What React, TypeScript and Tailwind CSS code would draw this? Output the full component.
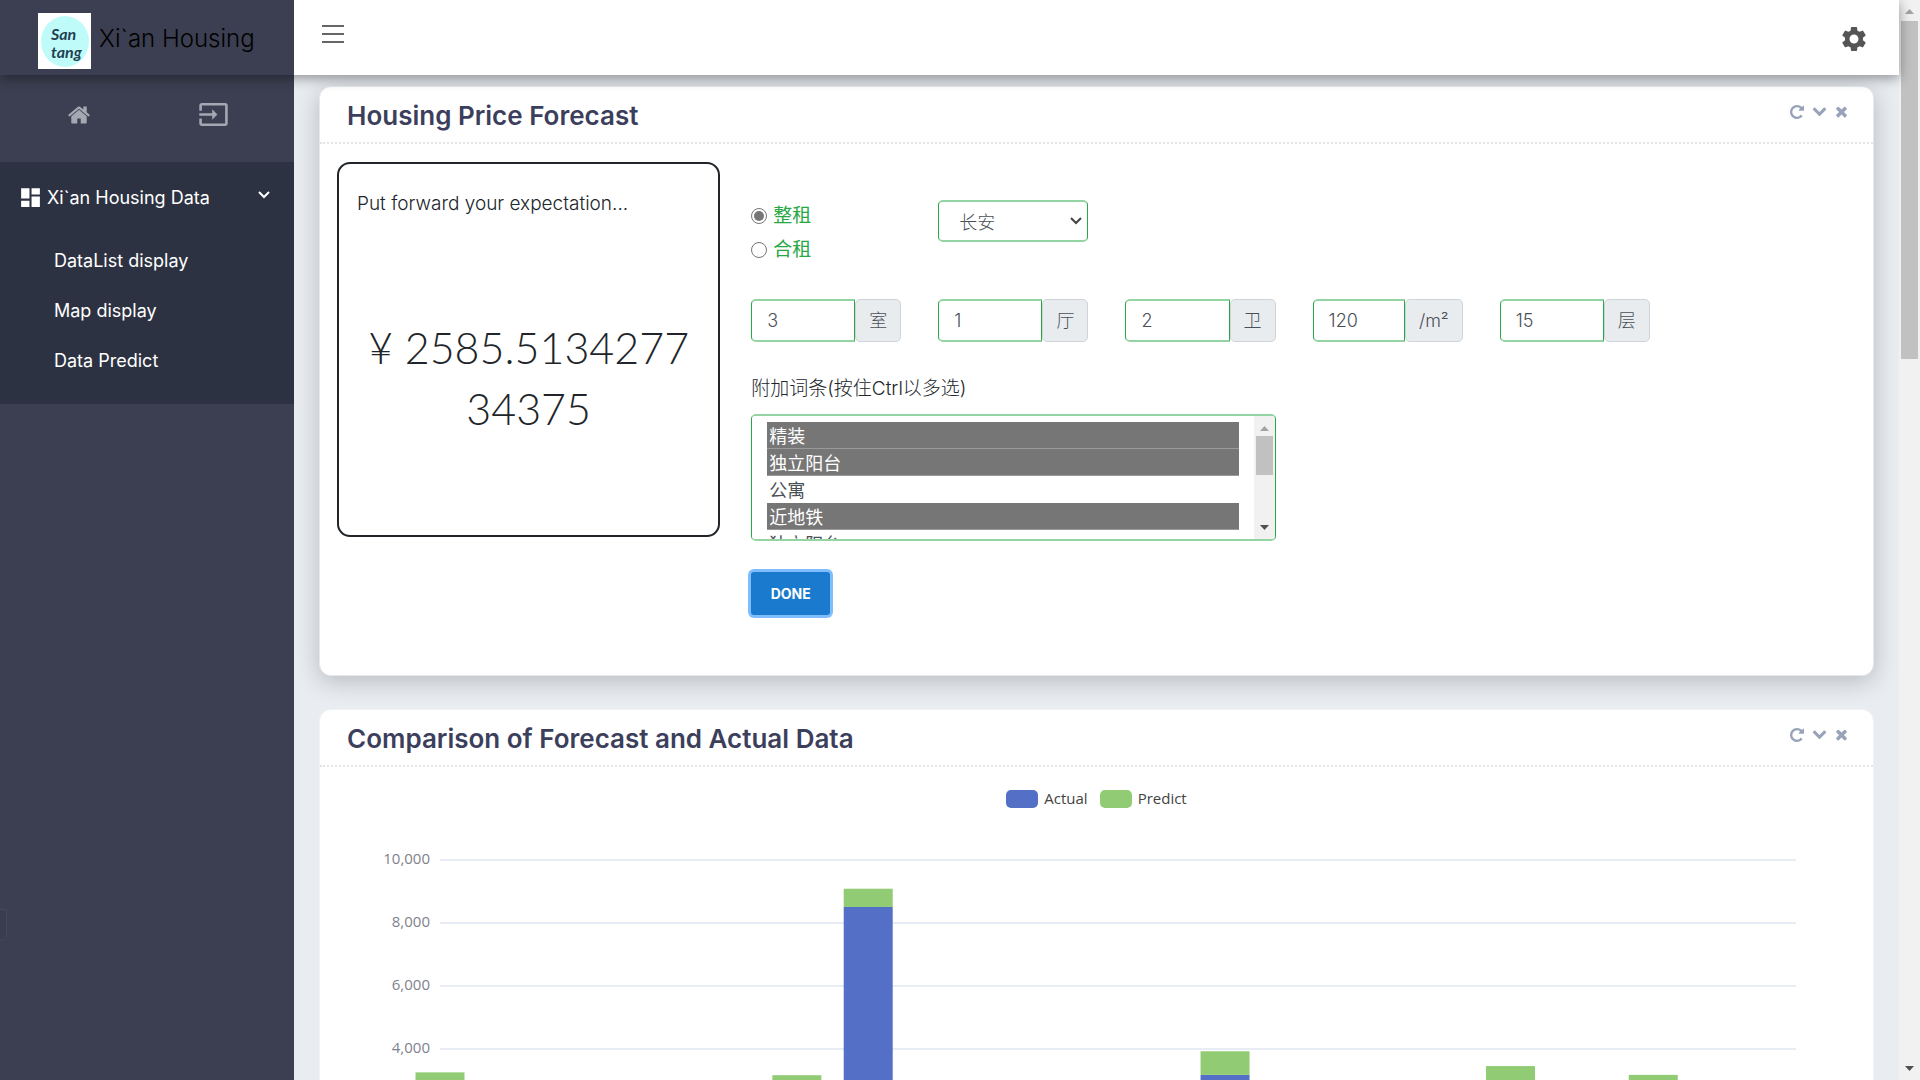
import React from "react";
import { MdDashboard, MdInput, MdSettings } from "react-icons/md";

type IconProps = { className?: string };

const HomeIcon = ({ className }: IconProps) => (
  <svg viewBox="0 0 1792 1792" fill="currentColor" className={className} aria-hidden="true">
    <path d="M1472 992v480q0 26-19 45t-45 19h-384v-384h-256v384h-384q-26 0-45-19t-19-45v-480q0-1 .5-3t.5-3l575-474 575 474q1 2 1 6zm223-69l-62 74q-8 9-21 11h-3q-13 0-21-7l-692-577-692 577q-12 8-24 7-13-2-21-11l-62-74q-8-10-7-23.500t11-21.500l719-599q32-26 76-26t76 26l244 204v-195q0-14 9-23t23-9h192q14 0 23 9t9 23v408l219 182q10 8 11 21.500t-7 23.500z" />
  </svg>
);

const RepeatIcon = () => (
  <svg viewBox="0 128 1536 1536" fill="currentColor" className="size-3.5" aria-hidden="true">
    <path d="M1536 256v448q0 26-19 45t-45 19h-448q-42 0-59-40-17-39 14-69l138-138q-148-137-349-137-104 0-198.500 40.500t-163.500 109.500-109.500 163.500-40.500 198.500 40.500 198.500 109.500 163.500 163.500 109.500 198.500 40.500q119 0 225-52t179-147q7-10 23-12 15 0 25 9l137 138q9 8 9.500 20.500t-7.500 22.500q-109 132-264 204.500t-327 72.500q-156 0-298-61t-245-164-164-245-61-298 61-298 164-245 245-164 298-61q147 0 284.500 55.500t244.500 156.500l130-129q29-31 70-14 39 17 39 59z" />
  </svg>
);

const ChevronIcon = () => (
  <svg viewBox="0 128 1792 1792" fill="currentColor" className="size-[15px]" aria-hidden="true">
    <path d="M1683 808l-742 741q-19 19-45 19t-45-19l-742-741q-19-19-19-45.500t19-45.500l166-165q19-19 45-19t45 19l531 531 531-531q19-19 45-19t45 19l166 165q19 19 19 45.500t-19 45.500z" />
  </svg>
);

const TimesIcon = () => (
  <svg viewBox="180 180 1432 1432" fill="currentColor" className="size-[13px]" aria-hidden="true">
    <path d="M1490 1322q0 40-28 68l-136 136q-28 28-68 28t-68-28l-294-294-294 294q-28 28-68 28t-68-28l-136-136q-28-28-28-68t28-68l294-294-294-294q-28-28-28-68t28-68l136-136q28-28 68-28t68 28l294 294 294-294q28-28 68-28t68 28l136 136q28 28 28 68t-28 68l-294 294 294 294q28 28 28 68z" />
  </svg>
);

const Logo = () => (
  <svg viewBox="0 0 53 56" className="h-14 w-[53px] bg-white" role="img" aria-label="San tang">
    <ellipse cx="27" cy="28.500" rx="24" ry="25.500" fill="#bffcf9" />
    <g fill="#1f3f52" fontFamily="Lato, sans-serif" fontStyle="italic" fontWeight="700" fontSize="16">
      <text x="13" y="27">San</text>
      <text x="13" y="45">tang</text>
    </g>
  </svg>
);

const Triangle = ({ up, className }: { up?: boolean; className?: string }) => (
  <svg viewBox="0 0 9 5" fill="currentColor" className={className} aria-hidden="true">
    <path d={up ? "M0 5 4.500 0 9 5z" : "M0 0h9L4.500 5z"} />
  </svg>
);

const navItems = ["DataList display", "Map display", "Data Predict"];

function Header() {
  return (
    <header className="relative z-20 flex h-[75px] shrink-0 bg-white shadow-[0_3px_12px_rgba(0,0,0,0.4)]">
      <a href="#top" className="flex w-[294px] shrink-0 gap-2 bg-[#3c3f51] pt-[13px] pl-[38px] text-black">
        <Logo />
        <span className="pt-2 text-[24px] leading-9 font-light whitespace-nowrap">Xi`an Housing</span>
      </a>
      <div className="flex min-w-0 flex-1 items-start justify-between pr-[30px] pl-7">
        <button type="button" aria-label="Toggle menu" className="mt-[25px] flex w-[22px] flex-col gap-1.5">
          <span className="h-0.5 w-full bg-[#666]" />
          <span className="h-0.5 w-full bg-[#666]" />
          <span className="h-0.5 w-full bg-[#666]" />
        </button>
        <button type="button" aria-label="Settings" className="mt-6 text-[#555]">
          <MdSettings className="size-[30px]" />
        </button>
      </div>
    </header>
  );
}

function Sidebar() {
  return (
    <aside className="relative w-[294px] shrink-0 bg-[#3c3f51]">
      <div className="flex h-[87px] items-start text-[#a5a7b3]">
        <a href="#home" aria-label="Home" className="flex w-[158px] justify-center pt-7">
          <HomeIcon className="size-6" />
        </a>
        <a href="#login" aria-label="Login" className="pt-6 pl-10">
          <MdInput className="size-[31px]" />
        </a>
      </div>
      <nav className="bg-[#2d3242] pt-[19px] pb-[19px] text-white">
        <button type="button" className="flex h-8 w-full items-center pr-6 pl-[18px] text-left">
          <MdDashboard className="size-[25px]" />
          <span className="ml-1 flex-1 text-[18px]">Xi`an Housing Data</span>
          <svg viewBox="0 0 12 8" className="mb-1 h-2 w-3" fill="none" stroke="currentColor" strokeWidth="2" aria-hidden="true">
            <path d="M1 1l5 5 5-5" />
          </svg>
        </button>
        <ul className="mt-[22px]">
          {navItems.map((item) => (
            <li key={item}>
              <a href="#nav" className="flex h-[50px] items-center pl-[54px] text-[18px]">
                {item}
              </a>
            </li>
          ))}
        </ul>
      </nav>
      <div className="absolute top-[834px] left-0 h-8 w-[7px] rounded-br-md border border-l-0 border-[#44475c] bg-[#393e4e]" />
    </aside>
  );
}

function Card({ title, raised, children }: { title: string; raised?: boolean; children: React.ReactNode }) {
  return (
    <section
      className={
        raised
          ? "rounded-xl border border-[#e6e8ed] bg-white shadow-[0_5px_25px_rgba(0,0,0,0.22)]"
          : "rounded-xl border border-[#f0f2f5] bg-white"
      }
    >
      <div className="flex h-[57px] items-start justify-between border-b-2 border-dotted border-[#e3e4e6] pr-[25px] pl-[27px]">
        <h2 className="pt-[11px] text-[26px] leading-9 font-semibold text-[#3c3f5c]">{title}</h2>
        <div className="flex items-center gap-2 pt-[17px] text-[#98a3b9]">
          <button type="button" aria-label="Reload"><RepeatIcon /></button>
          <button type="button" aria-label="Collapse"><ChevronIcon /></button>
          <button type="button" aria-label="Close"><TimesIcon /></button>
        </div>
      </div>
      {children}
    </section>
  );
}

const fields = [
  { name: "rooms", value: "3", unit: "室" },
  { name: "halls", value: "1", unit: "厅" },
  { name: "baths", value: "2", unit: "卫" },
  { name: "area", value: "120", unit: "/m²" },
  { name: "floor", value: "15", unit: "层" },
];

const tags = ["精装", "独立阳台", "公寓", "近地铁", "独立阳台"];

function ForecastForm() {
  return (
    <form className="grid grid-cols-6 gap-x-[37px] font-light" onSubmit={(e) => e.preventDefault()}>
      <fieldset className="flex flex-col pt-[37px] text-[19px] font-normal text-[#28a745]">
        <label className="flex h-[34px] items-center gap-1.5">
          <input type="radio" name="lease" defaultChecked className="size-4 appearance-none rounded-full border border-[#767676] bg-white bg-clip-content p-[2px] checked:bg-[#767676]" />
          整租
        </label>
        <label className="flex h-[34px] items-center gap-1.5">
          <input type="radio" name="lease" className="size-4 appearance-none rounded-full border border-[#767676] bg-white bg-clip-content p-[2px] checked:bg-[#767676]" />
          合租
        </label>
      </fieldset>
      <div className="relative mt-[38px] h-[42px]">
        <select
          aria-label="District"
          className="h-full w-full appearance-none rounded-[5px] border border-y-2 border-x-[#28a745] border-y-[#93d4a2] bg-white pt-0.5 pl-5 text-[18px] text-[#495057]"
        >
          <option>长安</option>
        </select>
        <svg viewBox="0 0 12 8" className="pointer-events-none absolute top-[17px] right-1.5 h-2 w-3" fill="none" stroke="#444" strokeWidth="2" aria-hidden="true">
          <path d="M1 1l5 5 5-5" />
        </svg>
      </div>
      <div className="col-span-full mt-8 grid grid-cols-6 gap-x-[37px]">
        {fields.map((f) => (
          <label key={f.name} className="flex h-[43px] min-w-0 text-[18px] text-[#495057]">
            <input
              type="text"
              name={f.name}
              defaultValue={f.value}
              className="w-0 min-w-0 flex-1 rounded-l-[5px] border border-y-2 border-x-[#28a745] border-y-[#93d4a2] bg-white pl-[15px] font-light"
            />
            <span className="flex items-center rounded-[5px] border border-[#ced4da] bg-[#e9ecef] px-[13px]">{f.unit}</span>
          </label>
        ))}
      </div>
      <label htmlFor="tags" className="col-span-full mt-[33px] text-[19px] leading-7 text-[#212529]">
        附加词条(按住Ctrl以多选)
      </label>
      <div className="col-span-3 mt-[11px] flex h-[127px] overflow-hidden rounded-[5px] border border-y-2 border-x-[#28a745] border-y-[#93d4a2] bg-white">
        <select
          id="tags"
          multiple
          size={4}
          defaultValue={["精装", "独立阳台", "近地铁"]}
          className="h-[123px] min-w-0 flex-1 overflow-hidden bg-white pt-1.5 pr-[15px] pl-[15px] text-[18px] text-[#495057]"
        >
          {tags.map((t, i) => (
            <option
              key={i}
              value={i === 4 ? "balcony" : t}
              className="h-[27px] border-b border-transparent px-0.5 py-0 leading-[26px] checked:border-[#999] checked:bg-[linear-gradient(#767676,#767676)] checked:[-webkit-text-fill-color:#fff]"
            >
              {t}
            </option>
          ))}
        </select>
        <div className="flex w-[21px] flex-col items-center bg-[#f1f1f1] pt-2.5 pb-[9px]">
          <Triangle up className="h-[5px] w-[9px] text-[#a3a3a3]" />
          <div className="mt-[5px] h-[39px] w-[17px] bg-[#c1c1c1]" />
          <Triangle className="mt-auto h-[5px] w-[9px] text-[#505050]" />
        </div>
      </div>
      <div className="col-span-full mt-[31px]">
        <button
          type="submit"
          className="h-[43px] w-[79px] rounded-[3px] bg-[#1a7acd] text-[14px] font-bold text-white shadow-[0_0_0_3px_#80bdff]"
        >
          DONE
        </button>
      </div>
    </form>
  );
}

function ForecastCard() {
  return (
    <Card title="Housing Price Forecast" raised>
      <div className="grid grid-cols-[383fr_1085fr] items-start gap-[31px] pt-[18px] pr-9 pb-[60px] pl-[17px]">
        <div className="h-[375px] rounded-[13px] border-2 border-[#212529] px-[18px] pt-[26px] text-[#212529]">
          <p className="text-[19px] leading-7 font-light">Put forward your expectation...</p>
          <p className="mt-[99px] text-center font-['Lato','Noto_Sans_CJK_SC',sans-serif] text-[43px] leading-[61px] font-light">
            ¥ 2585.5134277
            <br />
            34375
          </p>
        </div>
        <ForecastForm />
      </div>
    </Card>
  );
}

const ticks = ["10,000", "8,000", "6,000", "4,000"];
const gridLines = [0, 63, 126, 189, 252, 315];

/* Stacked values per slot on the category axis. */
const bars = [
  { slot: 0, actual: 2400, predict: 890 },
  { slot: 5, actual: 2500, predict: 700 },
  { slot: 6, actual: 8540, predict: 580 },
  { slot: 11, actual: 3210, predict: 750 },
  { slot: 15, actual: 2800, predict: 690 },
  { slot: 17, actual: 2500, predict: 710 },
];

const UNIT = 315 / 10000;

function ComparisonChart() {
  return (
    <div className="pt-[18px] font-['Open_Sans',sans-serif] text-[15px]">
      <div className="flex items-center justify-center gap-3 text-[#444]">
        <span className="flex h-[27px] items-center gap-1.5">
          <i className="h-[18px] w-8 rounded-[5px] bg-[#5470c6]" />
          Actual
        </span>
        <span className="flex h-[27px] items-center gap-1.5">
          <i className="h-[18px] w-8 rounded-[5px] bg-[#91cc75]" />
          Predict
        </span>
      </div>
      <div className="flex pt-12 pr-[77px] pb-10">
        <div className="-mt-[33px] w-[110px] shrink-0 text-right text-[#80828c]">
          {ticks.map((t) => (
            <div key={t} className="h-[63px] leading-[63px]">{t}</div>
          ))}
        </div>
        <svg viewBox="0 0 1356 315" preserveAspectRatio="none" className="ml-2.5 h-[315px] min-w-0 flex-1 overflow-visible" role="img" aria-label="Actual and predicted prices">
          {gridLines.map((y) => (
            <rect key={y} x="0" y={y - 1} width="1356" height="2" fill="#e8ecf4" />
          ))}
          {bars.map((b) => {
            const x = (b.slot * 1356) / 19 - 24.5;
            const low = b.actual * UNIT;
            const high = b.predict * UNIT;
            return (
              <g key={b.slot}>
                <rect x={x} y={316 - low} width="49" height={low} fill="#5470c6" />
                <rect x={x} y={316 - low - high} width="49" height={high} fill="#91cc75" />
              </g>
            );
          })}
        </svg>
      </div>
    </div>
  );
}

function PageScrollbar() {
  return (
    <div className="flex w-[21px] shrink-0 flex-col items-center bg-[#f1f1f1] py-[9px]" aria-hidden="true">
      <Triangle up className="h-[5px] w-[9px] text-[#a3a3a3]" />
      <div className="mt-[7px] h-[338px] w-[17px] bg-[#c1c1c1]" />
      <Triangle className="mt-auto h-[5px] w-[9px] text-[#505050]" />
    </div>
  );
}

export default function App() {
  return (
    <div className="flex h-screen overflow-hidden bg-[#e9edf2] font-['Inter','Noto_Sans_CJK_SC',sans-serif]">
      <div className="flex min-w-0 flex-1 flex-col">
        <Header />
        <div className="flex min-h-0 flex-1">
          <Sidebar />
          <main className="flex min-w-0 flex-1 flex-col gap-[33px] overflow-hidden pt-[11px] pr-[25px] pl-[25px]">
            <ForecastCard />
            <Card title="Comparison of Forecast and Actual Data">
              <ComparisonChart />
            </Card>
          </main>
        </div>
      </div>
      <PageScrollbar />
    </div>
  );
}
